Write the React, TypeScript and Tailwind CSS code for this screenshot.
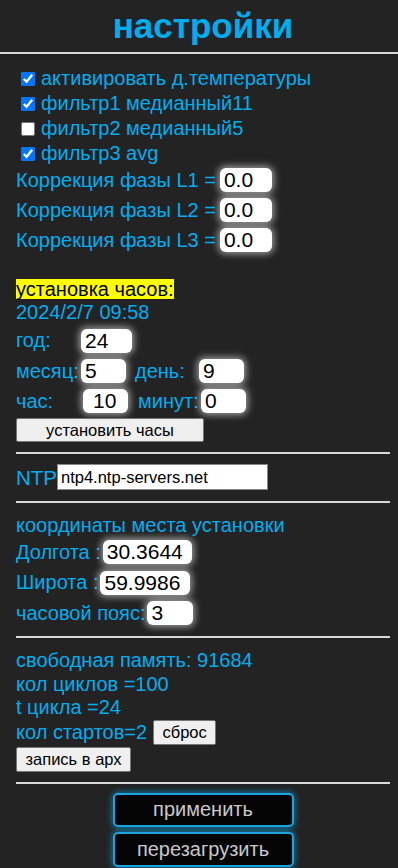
import React from "react";

const blue = "text-[#00aeef]";

function Field({ value, w, className = "" }: { value: string; w: string; className?: string }) {
  return (
    <input
      defaultValue={value}
      className={`${w} h-[24px] rounded-[6px] bg-white px-[4px] text-[21px] leading-[24px] text-black shadow-[0_0_7px_2px_rgba(255,255,255,0.55)] outline-none ${className}`}
      style={{ fontFamily: "'Liberation Sans', Arial, sans-serif" }}
    />
  );
}

function Check({ label, checked }: { label: string; checked: boolean }) {
  return (
    <label className="flex h-[25px] items-center">
      <input type="checkbox" defaultChecked={checked} className="ml-[5px] mr-[6px] h-[14px] w-[14px]" />
      <span>{label}</span>
    </label>
  );
}

const smallBtn =
  "rounded-[2px] border border-[#767676] bg-[#efefef] text-[16.5px] leading-[20px] text-black";
const bigBtn =
  "w-[181px] rounded-[5px] border-2 border-[#1aa3dc] bg-[#050505] text-[20px] text-[#c8c8c8] shadow-[0_0_6px_1px_rgba(0,170,240,0.6)]";

export default function App() {
  return (
    <div
      className={`min-h-[868px] w-[398px] bg-[#232323] ${blue} text-[20px] leading-[23px]`}
      style={{ fontFamily: "'Liberation Sans', Arial, sans-serif" }}
    >
      <h1 className="pl-[16px] pr-[8px] pt-[5px] text-center text-[35px] font-bold leading-[42px]">настройки</h1>
      <div className="mt-[5px] border-t-2 border-[#d8d8d8]" />
      <div className="pl-[16px] pr-[8px]">
        <div className="mt-[12px]">
          <Check label="активировать д.температуры" checked />
          <Check label="фильтр1 медианный11" checked />
          <Check label="фильтр2 медианный5" checked={false} />
          <Check label="фильтр3 avg" checked />
        </div>
        <div className="mt-[2px] flex flex-col gap-[6px]">
          {["L1", "L2", "L3"].map((l) => (
            <div key={l} className="flex h-[24px] items-center">
              <span className="mr-[4px]">Коррекция фазы {l} =</span>
              <Field value="0.0" w="w-[52px]" />
            </div>
          ))}
        </div>
        <div className="mt-[27px] flex h-[20px] items-center">
          <span className="bg-[#ffff00] text-black leading-[20px]">установка часов:</span>
        </div>
        <div className="mt-[3px] h-[21px] leading-[21px]">2024/2/7 09:58</div>
        <div className="mt-[5px] flex h-[25px] items-center">
          <span className="w-[65px]">год:</span>
          <Field value="24" w="w-[51px]" />
        </div>
        <div className="mt-[6px] flex h-[24px] items-center">
          <span className="w-[65px]">месяц:</span>
          <Field value="5" w="w-[45px]" />
          <span className="ml-[9px] w-[64px]">день:</span>
          <Field value="9" w="w-[45px]" />
        </div>
        <div className="mt-[6px] flex h-[24px] items-center">
          <span className="w-[67px]">час:</span>
          <Field value="10" w="w-[45px]" className="pl-[10px]" />
          <span className="ml-[10px] w-[63px]">минут:</span>
          <Field value="0" w="w-[45px]" />
        </div>
        <button className={`mt-[5px] h-[24px] w-[188px] ${smallBtn}`}>установить часы</button>
        <div className="mt-[10px] border-t-2 border-[#d8d8d8]" />
        <div className="mt-[10px] flex h-[26px] items-center">
          <span className="w-[41px] text-[20.5px]">NTP</span>
          <input
            defaultValue="ntp4.ntp-servers.net"
            className="h-[26px] w-[211px] border border-[#888] bg-white px-[3px] text-[16.5px] text-black outline-none"
            style={{ fontFamily: "'Liberation Sans', Arial, sans-serif" }}
          />
        </div>
        <div className="mt-[11px] border-t-2 border-[#d8d8d8]" />
        <div className="mt-[12px] h-[21px] leading-[21px]">координаты места установки</div>
        <div className="mt-[4px] flex h-[24px] items-center">
          <span className="mr-[2px]">Долгота :</span>
          <Field value="30.3644" w="w-[89px]" />
        </div>
        <div className="mt-[6px] flex h-[25px] items-center">
          <span className="mr-[2px]">Широта :</span>
          <Field value="59.9986" w="w-[90px]" />
        </div>
        <div className="mt-[6px] flex h-[24px] items-center">
          <span className="mr-[2px]">часовой пояс:</span>
          <Field value="3" w="w-[46px]" />
        </div>
        <div className="mt-[11px] border-t-2 border-[#d8d8d8]" />
        <div className="mt-[11px] flex flex-col">
          <div className="h-[23.5px] leading-[23px]">свободная память: 91684</div>
          <div className="h-[23.5px] leading-[23px]">кол циклов =100</div>
          <div className="h-[23.5px] leading-[23px]">t цикла =24</div>
          <div className="flex h-[25px] items-center">
            <span>кол стартов=2</span>
            <button className={`ml-[6px] h-[25px] w-[63px] ${smallBtn}`}>сброс</button>
          </div>
        </div>
        <button className={`mt-[2px] h-[25px] w-[115px] ${smallBtn}`}>запись в арх</button>
        <div className="mt-[10px] border-t-2 border-[#d8d8d8]" />
        <div className="mt-[9px] flex flex-col items-center gap-[5px]">
          <button className={`h-[34px] ${bigBtn}`}>применить</button>
          <button className={`h-[35px] ${bigBtn}`}>перезагрузить</button>
        </div>
      </div>
    </div>
  );
}
